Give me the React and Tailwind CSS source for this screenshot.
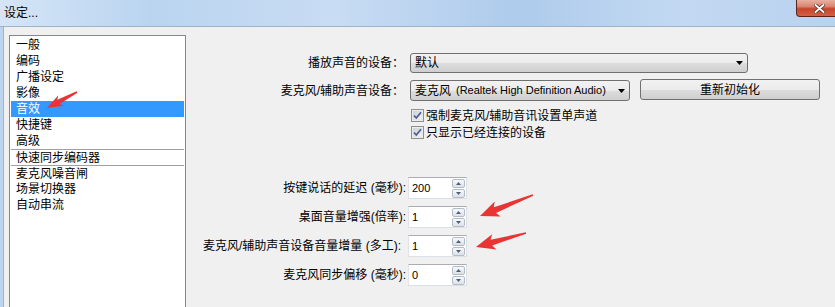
import React from "react";

function arrowPoints(tx, ty, px, py, L, W, w0, w1) {
  const dx = px - tx, dy = py - ty, len = Math.hypot(dx, dy);
  const ux = dx / len, uy = dy / len, nx = -uy, ny = ux;
  const Nx = px - ux * L, Ny = py - uy * L;
  const pts = [
    [tx + (nx * w0) / 2, ty + (ny * w0) / 2],
    [Nx + (nx * w1) / 2, Ny + (ny * w1) / 2],
    [Nx - ux * 3 + (nx * W) / 2, Ny - uy * 3 + (ny * W) / 2],
    [px, py],
    [Nx - ux * 3 - (nx * W) / 2, Ny - uy * 3 - (ny * W) / 2],
    [Nx - (nx * w1) / 2, Ny - (ny * w1) / 2],
    [tx - (nx * w0) / 2, ty - (ny * w0) / 2],
  ];
  return pts.map((p) => p.map((v) => v.toFixed(1)).join(",")).join(" ");
}

function Arrows() {
  return (
    <svg className="pointer-events-none absolute left-0 top-0" width="835" height="307">
      <polygon points={arrowPoints(77, 92, 47, 108, 13, 12, 1.5, 5)} fill="#ea3434" />
      <polygon points={arrowPoints(533, 195, 480, 216, 16, 16, 1.5, 6)} fill="#ea3434" />
      <polygon points={arrowPoints(526, 233, 476, 247, 16, 16, 1.5, 6)} fill="#ea3434" />
    </svg>
  );
}

function DropArrow() {
  return (
    <svg width="7" height="4" viewBox="0 0 7 4" className="absolute right-[4px] top-1/2 -translate-y-1/2">
      <polygon points="0,0 7,0 3.5,4" fill="#000" />
    </svg>
  );
}

function CheckBox() {
  return (
    <svg width="13" height="13" viewBox="0 0 13 13" className="shrink-0">
      <defs>
        <linearGradient id="cbg" x1="0" y1="0" x2="1" y2="1">
          <stop offset="0" stopColor="#cbcfd5" />
          <stop offset="1" stopColor="#f6f6f6" />
        </linearGradient>
      </defs>
      <rect x="0.5" y="0.5" width="12" height="12" fill="#f4f4f4" stroke="#8e8f8f" />
      <rect x="2" y="2" width="9" height="9" fill="url(#cbg)" stroke="#d6d9de" strokeWidth="0.6" />
      <path d="M3 6.5 L5.3 9 L10 3.3" fill="none" stroke="#4a5f97" strokeWidth="1.8" />
    </svg>
  );
}

function SpinBtn({ up }) {
  return (
    <div className="relative flex h-[9px] w-[13px] items-center justify-center rounded-[2px] border border-[#b6bcc6] bg-linear-to-b from-[#f7f8fa] to-[#dde2e8]">
      <svg width="5" height="3" viewBox="0 0 5 3">
        <polygon points={up ? "0,3 5,3 2.5,0" : "0,0 5,0 2.5,3"} fill="#4d5e7c" />
      </svg>
    </div>
  );
}

function Spin({ value }) {
  return (
    <div className="flex h-[22px] w-[59px] items-center justify-between border border-[#abadb3] border-b-[#dbdfe6] border-l-[#e2e3ea] border-r-[#dbdfe6] bg-white pl-[3px] pr-[1px]">
      <span className="text-[11px] leading-none">{value}</span>
      <div className="flex flex-col gap-[1px]">
        <SpinBtn up />
        <SpinBtn />
      </div>
    </div>
  );
}

const items = ["一般", "编码", "广播设定", "影像", "音效", "快捷键", "高级"];
const items2 = ["场景切换器", "自动串流"];

export default function App() {
  return (
    <div className="relative h-[307px] w-[835px] overflow-hidden bg-[#f0f0f0] font-['Liberation_Sans','Noto_Sans_CJK_SC',sans-serif] text-[12px] text-black">
      {/* title bar */}
      <div className="relative flex h-[27px] items-center border-b border-[#9fb2c8] bg-[linear-gradient(to_right,#d5e5f6_0%,#bad4f0_18%,#c8dcf3_40%,#aecbec_62%,#c3d9f2_82%,#b9d2ee_100%)] pl-[4px]">
        <span className="leading-none">设定...</span>
        <div className="absolute right-[-8px] top-0 flex h-[17px] w-[47px] items-start justify-start rounded-bl-[4px] border border-t-0 border-[#5a2418] bg-[linear-gradient(to_bottom,#eab0a0_0%,#d98670_40%,#c7452b_55%,#d46045_100%)] pl-[17px] pt-[4px]">
          <svg width="11" height="9" viewBox="0 0 11 9">
            <path d="M1.5 1 L9.5 8 M9.5 1 L1.5 8" stroke="#4b2a22" strokeWidth="3.4" strokeLinecap="round" />
            <path d="M1.5 1 L9.5 8 M9.5 1 L1.5 8" stroke="#ffffff" strokeWidth="1.9" strokeLinecap="round" />
          </svg>
        </div>
      </div>
      {/* body */}
      <div className="flex h-[280px]">
        <div className="w-[3px] bg-[#bcd4ee]" />
        <div className="w-[1px] bg-[#a3b3c6]" />
        {/* list */}
        <div className="ml-[5px] mt-[8px] h-[290px] w-[177px] border border-[#828790] bg-white p-[1px]">
          {items.map((t) => (
            <div
              key={t}
              className={
                "flex h-[16px] items-center pl-[5px] leading-none " +
                (t === "音效" ? "bg-[#3399ff] text-white" : "")
              }
            >
              {t}
            </div>
          ))}
          <div className="flex h-[16px] items-center border-t border-[#a0a0a0] pl-[5px] leading-none">快速同步编码器</div>
          <div className="flex h-[16px] items-center border-t border-[#a0a0a0] pl-[5px] leading-none">麦克风噪音闸</div>
          {items2.map((t) => (
            <div key={t} className="flex h-[16px] items-center pl-[5px] leading-none">
              {t}
            </div>
          ))}
        </div>
        {/* right panel */}
        <div className="flex flex-1 flex-col pt-[26px]">
          <div className="flex h-[20px] items-center">
            <div className="w-[224px] pr-[6px] text-right leading-none">播放声音的设备：</div>
            <div className="relative flex h-[20px] w-[338px] items-center rounded-[3px] border border-[#707070] bg-[linear-gradient(to_bottom,#f2f2f2_0%,#ebebeb_50%,#dddddd_51%,#cfcfcf_100%)] pl-[4px] leading-none">
              默认
              <DropArrow />
            </div>
          </div>
          <div className="mt-[7px] flex h-[21px] items-start">
            <div className="flex h-[21px] w-[224px] items-center justify-end pr-[6px] leading-none">麦克风/辅助声音设备：</div>
            <div className="relative flex h-[21px] w-[220px] items-center rounded-[3px] border border-[#707070] bg-[linear-gradient(to_bottom,#f2f2f2_0%,#ebebeb_50%,#dddddd_51%,#cfcfcf_100%)] pl-[4px] leading-none">
              <span>麦克风</span>
              <span className="ml-[5px] text-[11px]">(Realtek High Definition Audio)</span>
              <DropArrow />
            </div>
            <div className="ml-[10px] mt-[-1px] flex h-[21px] w-[180px] items-center justify-center rounded-[3px] border border-[#707070] bg-[linear-gradient(to_bottom,#f2f2f2_0%,#ebebeb_50%,#dddddd_51%,#cfcfcf_100%)] leading-none">
              重新初始化
            </div>
          </div>
          <div className="ml-[225px] mt-[6px] flex h-[17px] items-center gap-[2px] leading-none">
            <CheckBox />
            <span>强制麦克风/辅助音讯设置单声道</span>
          </div>
          <div className="ml-[225px] flex h-[17px] items-center gap-[2px] leading-none">
            <CheckBox />
            <span>只显示已经连接的设备</span>
          </div>
          <div className="mt-[36px] flex flex-col gap-[7px]">
            {[
              ["按键说话的延迟 (毫秒):", "200", ""],
              ["桌面音量增强(倍率):", "1", ""],
              ["麦克风/辅助声音设备音量增量 (多工):", "1", "pr-[5px]"],
              ["麦克风同步偏移 (毫秒):", "0", ""],
            ].map(([l, v, extra]) => (
              <div key={l} className="flex h-[22px] items-center">
                <div className={"w-[220px] whitespace-nowrap text-right leading-none " + extra}>{l}</div>
                <div className="ml-[2px]">
                  <Spin value={v} />
                </div>
              </div>
            ))}
          </div>
        </div>
      </div>
      <Arrows />
    </div>
  );
}
